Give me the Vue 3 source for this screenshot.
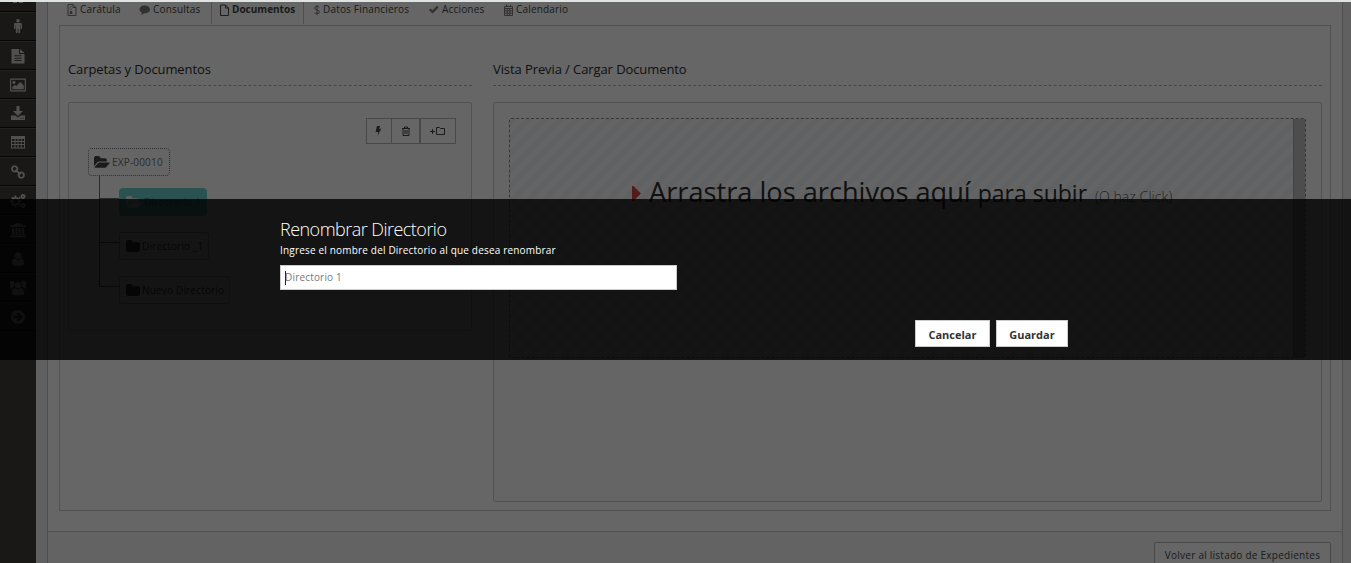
<script setup>
const nav = [
  { name: 'home', vb: '0 0 16 16', w: 16, d: 'M8 1 1 8h2v6h4v-4h2v4h4V8h2z' },
  { name: 'male', vb: '0 0 16 16', w: 16, d: 'M8 1a1.800 1.800 0 1 1 0 3.600A1.800 1.800 0 0 1 8 1M5.400 5h5.200q1.400 0 1.400 1.400v3.800q0 .7-.7.7t-.7-.7V7h-.4v7.500q0 .8-.9.8t-.9-.8V11h-.8v3.500q0 .8-.9.8t-.9-.8V7h-.4v3.200q0 .7-.7.7t-.7-.7V6.400Q4 5 5.400 5' },
  { name: 'file', low: true, vb: '0 0 16 16', w: 16, d: 'M1.500 1H9v5h5.500v9.500h-13zM10 1l4.500 4H10zM4.500 7.300v1h7v-1zM4.500 9.700v1h7v-1zM4.500 12v1h7v-1z' },
  { name: 'image', low: true, vb: '0 0 18 16', w: 18, d: 'M2 1.500h14Q17 1.500 17 2.500v11q0 1-1 1H2q-1 0-1-1v-11q0-1 1-1M2.200 2.700v10.600h13.600V2.700zM5 3.700a1.600 1.600 0 1 1 0 3.200 1.600 1.600 0 0 1 0-3.200M3.300 12.200V10l2.500-2.300 1.500 1.400 4-4 3.500 3.500v3.600z' },
  { name: 'download', vb: '0 0 16 16', w: 16, d: 'M6.500 1h3v5H13L8 11 3 6h3.500zM1 10.500h4.500L8 12.500l2.500-2H15V15H1zM10.500 12.800v1h1v-1zM12.700 12.800v1h1v-1z' },
  { name: 'table', vb: '0 0 16 16', w: 16, d: 'M1 2h14v12.500H1zM2 5v2h2.500V5zM5.500 5v2h2V5zM8.500 5v2h2.300V5zM11.700 5v2H14V5zM2 8v2h2.500V8zM5.500 8v2h2V8zM8.500 8v2h2.300V8zM11.700 8v2H14V8zM2 11v2.500h2.500V11zM5.500 11v2.500h2V11zM8.500 11v2.500h2.300V11zM11.700 11v2.500H14V11z' },
  { name: 'link', low: true, vb: '0 0 16 16', w: 16, stroke: 'M4.700 2.200a2.700 2.700 0 1 1-.01 0M11.300 8.400a2.700 2.700 0 1 1-.01 0M5.500 5.800l5 4.600' },
  { name: 'gears', low: true, vb: '0 0 18 16', w: 18, stroke: 'M6.500 4.800a3.400 3.400 0 1 1-.01 0M14 1.900a1.600 1.600 0 1 1-.01 0M14 10.900a1.600 1.600 0 1 1-.01 0', d: 'M5.700 2.500h1.600v2H5.700zM5.700 12h1.600v2H5.700zM1 7.500h2v1.600H1zM10 7.500h2v1.600h-2zM2.200 5l1.200-1.200L4.800 5 3.600 6.300zM9.400 4.900l1.200-1.200 1.200 1.200-1.300 1.300zM2.200 11.700l1.400-1.300L4.800 11.700l-1.300 1.300zM9.300 11.700l1.200-1.300 1.300 1.300-1.200 1.200z' },
  { name: 'bank', low: true, vb: '0 0 18 16', w: 18, d: 'M9 .8 17 4v1H1V4zM3 6h2.200v6.500H3zM6.500 6h2v6.500h-2zM9.600 6h2v6.500h-2zM12.900 6h2.200v6.500h-2.200zM2 12.500h14v1H2zM1 14h16v1.200H1z' },
  { name: 'user', low: true, vb: '0 0 16 16', w: 16, d: 'M8 1.500a3.300 3.300 0 1 1 0 6.600 3.300 3.300 0 0 1 0-6.600M5 7.500Q8 10.300 11 7.500 14 7.500 14 12.300 14 14.800 12 14.800H4Q2 14.800 2 12.300 2 7.500 5 7.500', solid: true },
  { name: 'users', low: true, vb: '0 0 18 16', w: 18, d: 'M9 2.300a3 3 0 1 1 0 6 3 3 0 0 1 0-6M6.500 8.300Q9 10.300 11.500 8.300 15 8 15 13q0 2.300-2 2.300H5Q3 15.300 3 13q0-5 3.500-4.700M3.500.7a2.200 2.200 0 0 1 2 3q-1 1.600-.3 3Q3 7 2.400 8.700 1 8.700 1 7q0-1.600 1-2A2.300 2.300 0 0 1 3.500.7M14.500.7a2.200 2.200 0 0 0-2 3q1 1.600.3 3 2.200.3 2.800 2Q17 8.700 17 7q0-1.600-1-2A2.300 2.300 0 0 0 14.500.7', solid: true },
  { name: 'arrow', low: true, vb: '0 0 1792 1792', w: 18, d: 'M1413 896q0-27-18-45l-91-91-362-362q-18-18-45-18t-45 18l-91 91q-18 18-18 45t18 45l189 189h-502q-26 0-45 19t-19 45v128q0 26 19 45t45 19h502l-189 189q-19 19-19 45t19 45l91 91q18 18 45 18t45-18l362-362 91-91q18-18 18-45zm251 0q0 209-103 385.500t-279.500 279.500-385.500 103-385.500-103-279.500-279.500-103-385.500 103-385.500 279.500-279.500 385.500-103 385.500 103 279.500 279.500 103 385.500z' },
]
const tabs = [
  { id: 'caratula', label: 'Carátula', stroke: 'M2 .5h5l3 3v8H2zM7 .5v3h3M5 2v1M4 3.500v1M5 5v1', d: 'M4 7h2l.5 3h-3z' },
  { id: 'consultas', label: 'Consultas', d: 'M5.500 1.500C8.500 1.500 11 3 11 5.500S8.500 9.300 5.500 9.300L2 11l.9-2.500C1.300 7.900.5 6.800.5 5.500.5 3 3 1.500 5.500 1.500' },
  { id: 'documentos', label: 'Documentos', active: true, stroke: 'M1.500 1h5l3 3v7.500h-8zM6.500 1v3h3' },
  { id: 'financieros', label: 'Datos Financieros', stroke: 'M5 1v10M7.200 3.500Q6.500 2.300 5 2.300 2.800 2.300 2.800 4T5 6Q7.400 6.300 7.400 8T5 9.700Q3 9.700 2.600 8.400' },
  { id: 'acciones', label: 'Acciones', d: 'M1 6l1.700-1.600L4.500 6.200 9 1.800l1.600 1.600-6.100 6.200z' },
  { id: 'calendario', label: 'Calendario', stroke: 'M1.500 2.500h8v9h-8zM1.500 4.500h8M1.500 6.800h8M1.500 9.200h8M4.200 4.500V11.500M6.800 4.500V11.500M3.500 .5v2.500M7.500 .5v2.500' },
]
const folder = 'M1728 608v704q0 92-66 158t-158 66h-1216q-92 0-158-66t-66-158v-960q0-92 66-158t158-66h320q92 0 158 66t66 158v32h672q92 0 158 66t66 158z'
const folderOpen = 'M1879 952q0 31-31 66l-336 396q-43 51-120.500 86.500t-143.500 35.500h-1088q-34 0-60.500-13t-26.500-43q0-31 31-66l336-396q43-51 120.500-86.500t143.500-35.500h1088q34 0 60.500 13t26.500 43zm-343-344v160h-832q-94 0-197 47.500t-164 119.500l-337 396-5 6q0-4-.5-12.500t-.5-12.500v-960q0-92 66-158t158-66h320q92 0 158 66t66 158v32h544q92 0 158 66t66 158z'
const dirs = [
  { id: 'dir-a', label: 'Directorio 1', open: true },
  { id: 'dir-b', label: 'Directorio _1' },
  { id: 'dir-c', label: 'Nuevo Directorio' },
]
</script>

<template>
  <div class="page">
    <aside class="side">
      <div v-for="n in nav" :key="n.name" class="nav" :class="{ low: n.low }">
        <svg :viewBox="n.vb" :width="n.w" height="16">
          <path v-if="n.d" :d="n.d" fill="currentColor" :fill-rule="n.solid ? 'nonzero' : 'evenodd'" />
          <path v-if="n.stroke" :d="n.stroke" fill="none" stroke="currentColor" stroke-width="1.8" />
        </svg>
      </div>
    </aside>

    <main class="card">
      <div class="tabs">
        <div v-for="t in tabs" :key="t.id" class="tab" :class="[t.id, { active: t.active }]">
          <svg viewBox="0 0 12 12" width="12" height="12">
            <path v-if="t.d" :d="t.d" fill="currentColor" />
            <path v-if="t.stroke" :d="t.stroke" fill="none" stroke="currentColor" />
          </svg>
          <span>{{ t.label }}</span>
        </div>
      </div>

      <div class="pane">
        <section class="left">
          <h4>Carpetas y Documentos</h4>
          <div class="well tree-well">
            <div class="tools">
              <button><svg viewBox="0 0 8 12" width="8" height="12"><path d="M3 1h3L5 4l2.300-.4L3.500 11l.8-4.200L1.500 7.300z" fill="currentColor" /></svg></button>
              <button><svg viewBox="0 0 12 12" width="12" height="12"><path d="M2 3.500h8M4.500 3V2h3v1M3 3.500v7h6v-7M5 5v4M7 5v4" fill="none" stroke="currentColor" /></svg></button>
              <button><svg viewBox="0 0 16 12" width="16" height="12"><path d="M1 6.500h5M3.500 4v5" fill="none" stroke="currentColor" /><path d="M7.500 2.500h3l1 1h4v6h-8z" fill="none" stroke="currentColor" /></svg></button>
            </div>
            <div class="node root">
              <svg viewBox="0 128 1920 1536" width="16" height="13"><path :d="folderOpen" fill="currentColor" /></svg>
              <span>EXP-00010</span>
            </div>
            <ul class="branch">
              <li v-for="d in dirs" :key="d.id">
                <div class="node" :class="[d.id, { open: d.open }]">
                  <svg v-if="d.open" viewBox="0 128 1920 1536" width="16" height="13"><path :d="folderOpen" fill="currentColor" /></svg>
                  <svg v-else viewBox="64 128 1664 1536" width="14" height="13"><path :d="folder" fill="currentColor" /></svg>
                  <span>{{ d.label }}</span>
                </div>
              </li>
            </ul>
          </div>
        </section>

        <section class="right">
          <h4>Vista Previa / Cargar Documento</h4>
          <div class="well preview">
            <div class="drop">
              <div class="message">
                <svg viewBox="0 0 9 15" width="9" height="15"><path d="M0 0h1.500L9 7.500 1.500 15H0z" fill="currentColor" /></svg>
                <span class="big">Arrastra los archivos aquí</span>
                <span class="mid">para subir</span>
                <span class="small">(O haz Click)</span>
              </div>
              <div class="scroll"></div>
            </div>
          </div>
        </section>
      </div>

      <footer><button class="back"><span>Volver al listado de Expedientes</span></button></footer>
    </main>

    <div class="shade">
      <div class="dialog">
        <div class="inner">
          <h2><span>Renombrar Directorio</span></h2>
          <p><span>Ingrese el nombre del Directorio al que desea renombrar</span></p>
          <div class="field"><i></i><span>Directorio 1</span></div>
          <div class="actions">
            <button class="cancel"><span>Cancelar</span></button>
            <button class="save"><span>Guardar</span></button>
          </div>
        </div>
      </div>
    </div>
  </div>
</template>

<style>
body { margin: 0; overflow: hidden; }
</style>

<style scoped>
* { box-sizing: border-box; }
.page { position: relative; display: flex; width: 1351px; height: 563px; overflow: hidden; background: #efefef; font: 10px/14px "Open Sans", sans-serif; letter-spacing: .18px; color: #444; white-space: nowrap; }
svg { display: block; flex: none; }
button { display: flex; align-items: center; justify-content: center; margin: 0; padding: 0; font: inherit; letter-spacing: inherit; color: inherit; }
.side { width: 36px; height: 563px; background: #403e39; overflow: hidden; }
.nav { height: 29px; display: flex; align-items: center; justify-content: center; color: #c9c9c9; border-top: 1px solid #55534c; border-bottom: 1px solid #0f0e0d; }
.nav svg { margin-bottom: 1px; }
.nav.low svg { margin: 1px 0 0; }
.nav:first-child { margin-top: -17px; }
.card { width: 1296px; height: 563px; margin-left: 11px; background: #fff; border: solid #c4c4c4; border-width: 0 1px; display: flex; flex-direction: column; }
.tabs { height: 25px; flex: none; display: flex; padding-left: 11px; }
.tab { display: flex; padding-top: 3px; height: 24px; gap: 2px; }
.tab svg { color: #7a7a7a; margin-top: 1px; }
.tab span { line-height: 13px; }
.caratula { width: 72px; padding-left: 7px; }
.consultas { width: 80px; padding-left: 8px; }
.documentos { width: 93px; padding-left: 7px; border: solid #c4c4c4; border-width: 0 1px; font-weight: 700; letter-spacing: 0; gap: 1px; }
.documentos svg { color: #444; }
.financieros { width: 116px; padding-left: 8px; gap: 0; }
.financieros svg { margin-right: -1px; }
.acciones { width: 75px; padding-left: 8px; }
.calendario { padding-left: 8px; gap: 1px; }
.pane { width: 1272px; height: 486px; flex: none; margin-left: 11px; padding: 0 8px; border: 1px solid #cacaca; display: flex; gap: 21px; }
.left { width: 404px; }
.right { width: 829px; }
h4 { height: 60px; margin: 0 0 16px; padding-top: 34px; border-bottom: 1px dashed #b0b0b0; font-size: 13px; line-height: 18px; font-weight: 400; letter-spacing: -.09px; color: #2b2b2b; }
.well { border: 1px solid #ccc; border-radius: 2px; background: #fcfcfc; }
.tree-well { height: 229px; padding: 15px 15px 0 19px; }
.tools { display: flex; justify-content: flex-end; height: 26px; }
.tools button { width: 26px; height: 26px; border: 1px solid #b4b4b4; background: #fff; }
.tools button:first-child { padding-right: 2px; }
.tools button + button { width: 28px; border-left: 0; }
.tools button:last-child { width: 36px; border-left: 1px solid #b4b4b4; padding-right: 2px; }
.node { display: flex; align-items: center; gap: 2px; height: 28px; padding-left: 6px; border: 1px dotted #777; border-radius: 4px; color: #707070; }
.node svg { color: #444; }
.root { width: 82px; margin-top: 4px; padding-left: 5px; }
.branch { list-style: none; margin: 0 0 0 11px; padding: 12px 0 0; border-left: 1px solid #666; height: 111px; }
.branch li { display: flex; align-items: center; height: 28px; margin-bottom: 16px; }
.branch li::before { content: ""; width: 19px; height: 1px; background: #666; margin-top: -7px; }
.branch .dir-a { width: 88px; border: 0; background: #66cdc8; color: #3d8a86; padding-left: 7px; }
.branch .dir-a svg { color: #dff5f4; }
.branch .dir-b { width: 90px; color: #444; }
.branch .dir-c { width: 111px; color: #444; }
.preview { height: 400px; padding: 15px; }
.drop { width: 797px; height: 240px; border: 1px dashed #8b8b8b; border-radius: 2px; display: flex; background: repeating-linear-gradient(135deg, #f0f3f7 0 5.650px, #fbfbfb 5.650px 11.310px); }
.message { width: 783px; height: 100px; padding: 56px 0 0 122px; display: flex; align-items: baseline; color: #2b2b2b; letter-spacing: 0; line-height: 34px; }
.message svg { color: #d04848; margin-right: 8px; position: relative; top: -1px; }
.big { font-size: 27.200px; margin-right: 7px; }
.mid { font-size: 23px; margin-right: 8px; }
.small { font-size: 14.200px; font-weight: 300; color: #555; }
.scroll { flex: 1; background: #c1c1c1; border-left: 1px solid #aaa; }
footer { margin-top: 20px; height: 40px; border-top: 1px solid #cacaca; background: #f8f8f8; padding: 10px 11px 0; display: flex; justify-content: flex-end; }
.back { width: 177px; height: 27px; background: #fff; border: 1px solid #b4b4b4; border-radius: 2px; padding-bottom: 1px; letter-spacing: .25px; }
.shade { position: absolute; inset: 0; border-top: 2px solid #dfe3e1; background: rgba(0, 0, 0, .6); background-clip: padding-box; }
.dialog { margin-top: 197px; height: 161px; background: rgba(0, 0, 0, .8); }
.inner { width: 788px; margin-left: 280px; padding-top: 17px; color: #fff; }
h2 { margin: 0; font-size: 18px; line-height: 26px; height: 26px; font-weight: 300; letter-spacing: -.53px; }
p { margin: 1px 0 8px; height: 14px; }
.field { display: flex; align-items: center; width: 397px; height: 25px; background: #fff; border: 1px solid #ccc; padding-left: 4px; color: #777; }
.field i { width: 1px; height: 14px; background: #222; margin-right: -1px; }
.field span { margin-top: -1px; }
.actions { display: flex; justify-content: flex-end; gap: 6px; margin-top: 30px; }
.actions button { height: 27px; background: #fff; border: 1px solid #ccc; color: #333; font-weight: 700; font-size: 11px; letter-spacing: 0; padding-top: 2px; }
.cancel { width: 75px; }
.save { width: 72px; }
</style>
